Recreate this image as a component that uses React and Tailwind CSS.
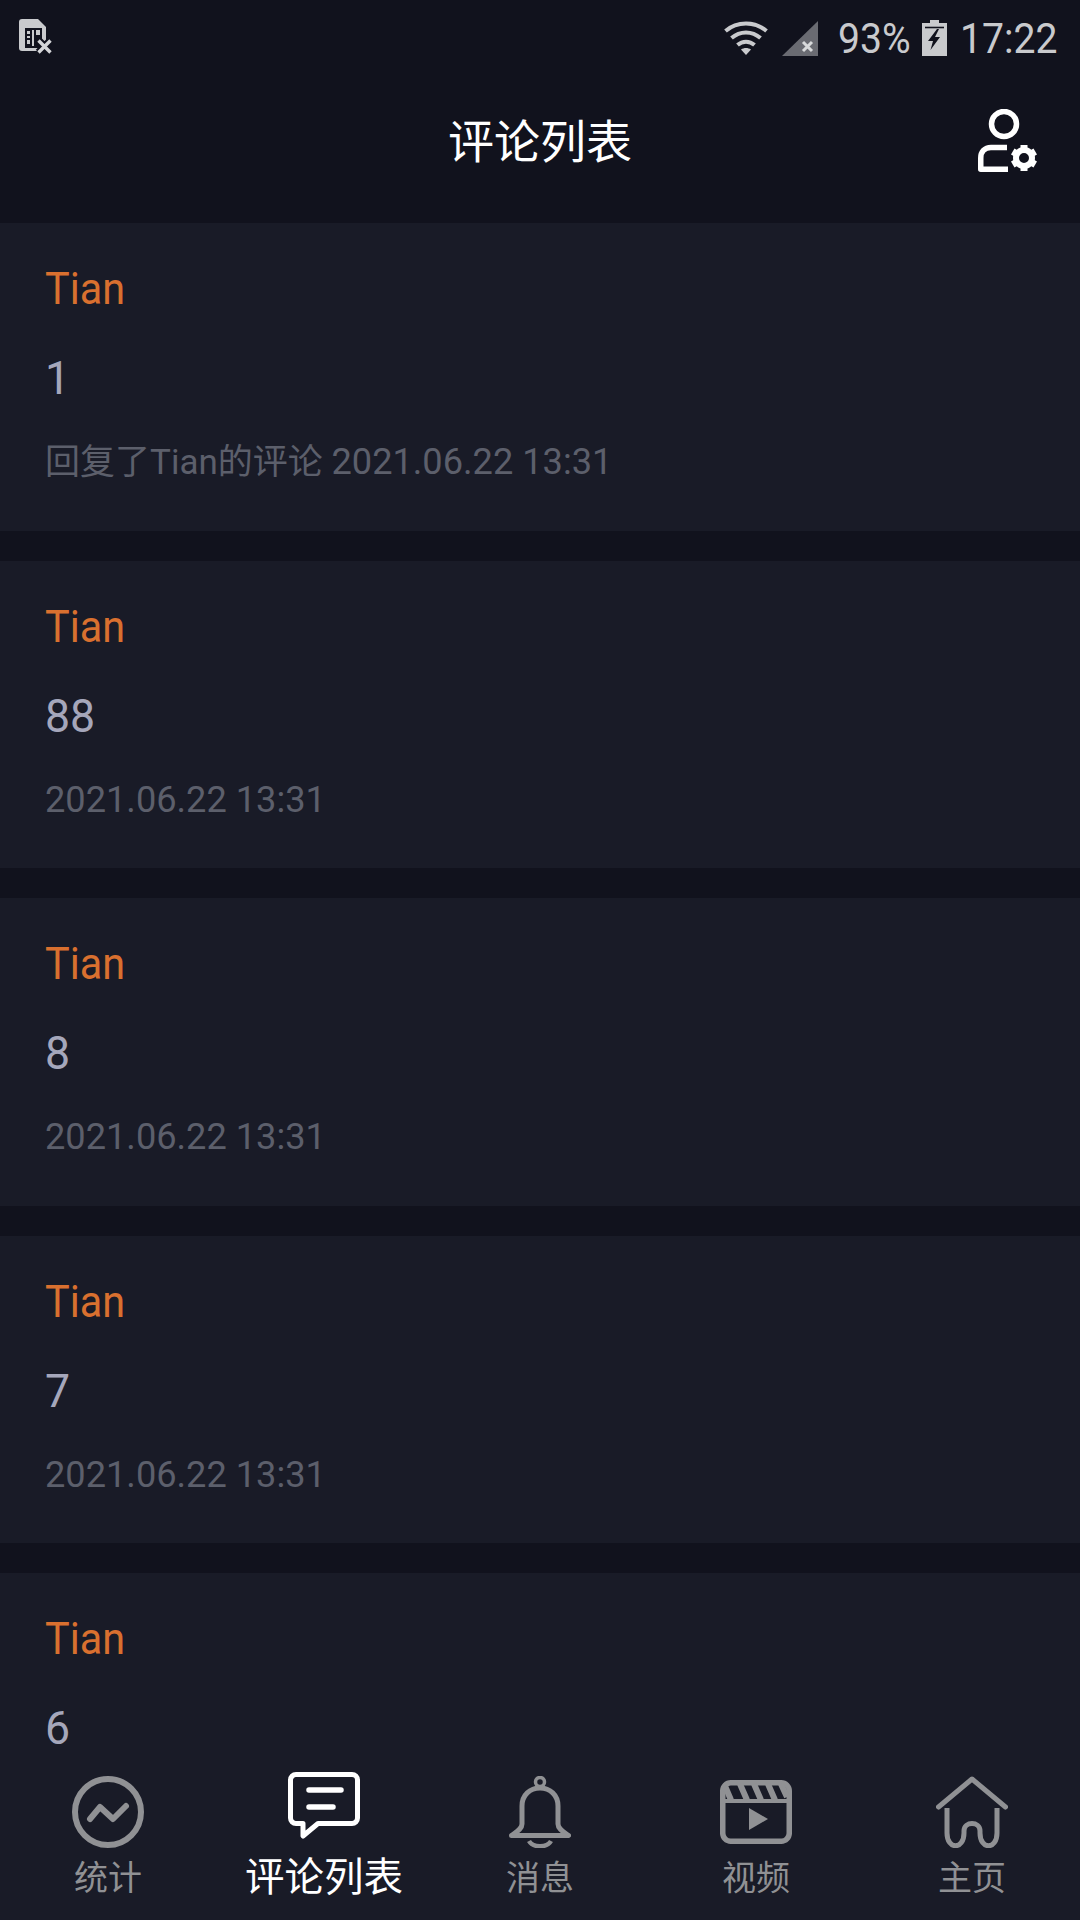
import React from "react";

const FONT = "font-['Roboto','Noto_Sans_CJK_SC',sans-serif]";

function SimIcon() {
  return (
    <svg width="38" height="38" viewBox="0 0 38 38" className="block">
      <path d="M3 0H19L27 8V32H3a3 3 0 0 1-3-3V3a3 3 0 0 1 3-3Z" fill="#c9cacd" />
      <path d="M6 9H23V29H6Z" fill="#11121d" />
      <path d="M8 12h3v3H8ZM8 17h3v2H8ZM8 21h3v4H8ZM13 11h2v16h-2ZM17 11h4v5h-4Z" fill="#c9cacd" />
      <path d="M19.500 21.500L31.500 33.500M31.500 21.500L19.500 33.500" stroke="#11121d" strokeWidth="7.500" />
      <path d="M19.500 21.500L31.500 33.500M31.500 21.500L19.500 33.500" stroke="#d4d5d8" strokeWidth="3.400" />
    </svg>
  );
}

function WifiIcon() {
  return (
    <svg width="44" height="34" viewBox="0 0 44 34" className="block">
      <g fill="none" stroke="#c9cacd" strokeWidth="4">
        <path d="M1.500 10C13 0 31 0 42.500 10" />
        <path d="M7.500 17C16 9.500 28 9.500 36.500 17" />
        <path d="M13.500 24C18.500 19.500 25.500 19.500 30.500 24" />
      </g>
      <path d="M17 28.500C20 26.500 24 26.500 27 28.500L22 34Z" fill="#c9cacd" />
    </svg>
  );
}

function SignalIcon() {
  return (
    <svg width="36" height="35" viewBox="0 0 36 35" className="block">
      <path d="M36 0V35H0Z" fill="#6a6b72" />
      <path d="M21 21L30 30M30 21L21 30" stroke="#d8d9db" strokeWidth="3" />
    </svg>
  );
}

function BatteryIcon() {
  return (
    <svg width="25" height="36" viewBox="0 0 25 36" className="block">
      <path d="M8 0H17V3H25V36H0V3H8Z" fill="#c9cacd" />
      <path d="M3 7.500H22" stroke="#11121d" strokeWidth="1.600" />
      <path d="M15 9L6 21H11L8.500 30L18 17H13L17 9Z" fill="#11121d" />
    </svg>
  );
}

function UserGear() {
  return (
    <svg width="60" height="64" viewBox="0 0 60 64" className="block">
      <circle cx="26" cy="15" r="12.500" fill="none" stroke="#fff" strokeWidth="5.500" />
      <path d="M29 38.500H13C6.500 38.500 2.750 43 2.750 49V60.250H30" fill="none" stroke="#fff" strokeWidth="5.500" strokeLinejoin="round" />
      <circle cx="46" cy="49" r="8" fill="none" stroke="#fff" strokeWidth="6" />
      <g fill="#fff">
        <path d="M42.500 36h7v5h-7Z" />
        <path d="M42.500 36h7v5h-7Z" transform="rotate(60 46 49)" />
        <path d="M42.500 36h7v5h-7Z" transform="rotate(120 46 49)" />
        <path d="M42.500 36h7v5h-7Z" transform="rotate(180 46 49)" />
        <path d="M42.500 36h7v5h-7Z" transform="rotate(240 46 49)" />
        <path d="M42.500 36h7v5h-7Z" transform="rotate(300 46 49)" />
      </g>
    </svg>
  );
}

const G = "#909194";

function StatsIcon() {
  return (
    <svg width="72" height="72" viewBox="0 0 72 72" className="block">
      <circle cx="36" cy="36" r="33" fill="none" stroke={G} strokeWidth="6" />
      <path d="M18 43L28 31L41 43L54 30" fill="none" stroke={G} strokeWidth="6" strokeLinecap="round" strokeLinejoin="round" />
    </svg>
  );
}

function CommentIcon() {
  return (
    <svg width="72" height="68" viewBox="0 0 72 68" className="mb-[12px] block">
      <path
        d="M8 2.500H64a5.500 5.500 0 0 1 5.500 5.500V46a5.500 5.500 0 0 1-5.500 5.500H30L15 64V51.500H8A5.500 5.500 0 0 1 2.500 46V8A5.500 5.500 0 0 1 8 2.500Z"
        fill="none"
        stroke="#fff"
        strokeWidth="5"
        strokeLinejoin="round"
      />
      <path d="M21 18H53M21 35H45" stroke="#fff" strokeWidth="5.500" strokeLinecap="round" />
    </svg>
  );
}

function BellIcon() {
  return (
    <svg width="62" height="72" viewBox="0 0 62 72" className="block">
      <circle cx="31" cy="6" r="4.500" fill="none" stroke={G} strokeWidth="3.500" />
      <path
        d="M13 30C13 19 21 12 31 12S49 19 49 30V48C49 53 55 56 59.500 59.500H2.500C7 56 13 53 13 48Z"
        fill="none"
        stroke={G}
        strokeWidth="5"
        strokeLinejoin="round"
      />
      <path d="M20 65C24 72 38 72 42 65" fill="none" stroke={G} strokeWidth="4.500" />
    </svg>
  );
}

function VideoIcon() {
  return (
    <svg width="72" height="64" viewBox="0 0 72 64" className="block">
      <rect x="2.750" y="2.750" width="66.500" height="58.500" rx="8" fill="none" stroke={G} strokeWidth="5.500" />
      <path d="M3 21H69" stroke={G} strokeWidth="4" />
      <path d="M5 6L11 20M20 4L27 20M34 4L41 20M48 4L55 20M61 4L67 17" stroke={G} strokeWidth="6" />
      <path d="M29 28L48 39L29 50Z" fill={G} />
    </svg>
  );
}

function HomeIcon() {
  return (
    <svg width="72" height="72" viewBox="0 0 72 72" className="block">
      <path d="M2.500 31L36 3L69.500 31" fill="none" stroke={G} strokeWidth="5" strokeLinecap="round" strokeLinejoin="round" />
      <path d="M11 32V57C11 74 28 74 28 57V55C28 45 44 45 44 55V57C44 74 61 74 61 57V32" fill="none" stroke={G} strokeWidth="5" />
    </svg>
  );
}

const comments = [
  { body: "1", prefix: "回复了Tian的评论", date: "2021.06.22 13:31" },
  { body: "88", date: "2021.06.22 13:31" },
  { body: "8", date: "2021.06.22 13:31" },
  { body: "7", date: "2021.06.22 13:31" },
  { body: "6" },
];

function CommentCard({ body, prefix, date }) {
  return (
    <div className="h-[307.6px] shrink-0 bg-[#191b27] pl-[45px] pt-[42px]">
      <div className="h-[48px] origin-left scale-x-[0.94] text-[44px] leading-[48px] text-[#d9702f]">Tian</div>
      <div className="mt-[41px] h-[48px] origin-left scale-x-[0.97] text-[46px] leading-[48px] text-[#a5a7bb]">{body}</div>
      {date && (
        <div className="mt-[38px] h-[44px] text-[36.200px] leading-[44px] text-[#5c5f6b]">
          {prefix && <span className="text-[35px]">{prefix} </span>}
          {date}
        </div>
      )}
    </div>
  );
}

function Tab({ icon, label, active }) {
  return (
    <div className="flex w-[216px] flex-col items-center">
      <div className="flex h-[72px] items-center">{icon}</div>
      <div className={active ? "mt-[5px] h-[50px] text-[39.500px] leading-[50px] text-white" : "mt-[5px] h-[50px] text-[34px] leading-[50px] text-[#909194]"}>
        {label}
      </div>
    </div>
  );
}

export default function App() {
  return (
    <div className={`flex h-[1920px] w-[1080px] flex-col overflow-hidden bg-[#11121d] ${FONT}`}>
      <div className="flex h-[76px] shrink-0 items-center justify-between pl-[19px]">
        <SimIcon />
        <div className="flex items-center">
          <WifiIcon />
          <div className="ml-[14px]"><SignalIcon /></div>
          <div className="ml-[20px] w-[71px] origin-left scale-x-[0.91] text-[43px] leading-[50px] whitespace-nowrap text-[#c9cacd]">93%</div>
          <div className="ml-[13px]"><BatteryIcon /></div>
          <div className="ml-[13px] w-[120px] origin-left scale-x-[0.91] text-[43px] leading-[50px] whitespace-nowrap text-[#c9cacd]">17:22</div>
        </div>
      </div>
      <div className="relative flex h-[147px] shrink-0 items-center justify-center pb-[15px]">
        <div className="text-[46px] leading-[60px] text-white">评论列表</div>
        <div className="absolute right-[42px] top-[33px]"><UserGear /></div>
      </div>
      <div className="flex min-h-0 flex-1 flex-col gap-[30px] overflow-hidden">
        {comments.map((c, i) => (
          <CommentCard key={i} body={c.body} prefix={c.prefix} date={c.date} />
        ))}
      </div>
      <div className="flex h-[156px] shrink-0 items-start bg-[#191b27] pt-[12px]">
        <Tab icon={<StatsIcon />} label="统计" />
        <Tab icon={<CommentIcon />} label="评论列表" active />
        <Tab icon={<BellIcon />} label="消息" />
        <Tab icon={<VideoIcon />} label="视频" />
        <Tab icon={<HomeIcon />} label="主页" />
      </div>
    </div>
  );
}
